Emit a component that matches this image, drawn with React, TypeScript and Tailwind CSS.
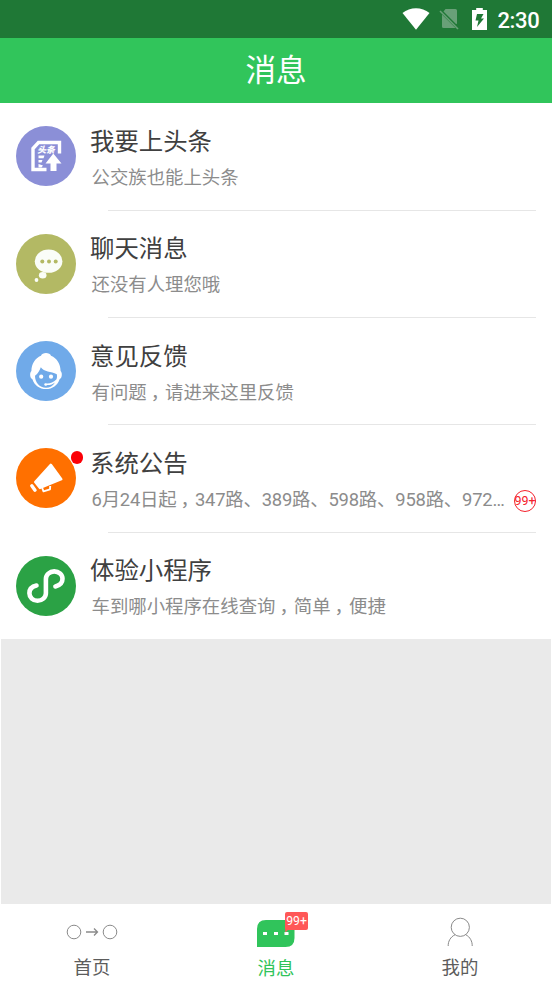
import { Fragment, ReactNode } from "react";

type Message = {
  title: string;
  desc: string;
  color: string;
  icon: ReactNode;
  dot?: boolean;
  count?: string;
};

function HeadlineIcon() {
  return (
    <svg viewBox="0 0 60 60" className="w-full h-full">
      <path d="M43.5 27.5V16.5H22.5L17 22.5V43.5H30.5" fill="none" stroke="#fff" strokeWidth="3.4" />
      <text x="21.2" y="27.3" fontSize="8.8" fontWeight="900" fontStyle="italic" fill="#fff" fontFamily="Noto Sans CJK SC, sans-serif">
        头条
      </text>
      <path d="M22.5 29.5H28.5L27.5 32.2H22.5ZM22.5 34H26.5L25.5 36.5H22.5ZM22.5 38L27 39.5L25.5 41.5H22.5Z" fill="#fff" />
      <path d="M37.3 27.5L45.5 37.5H40.5V45H34.5V37.5H29.5Z" fill="#fff" />
    </svg>
  );
}

function ChatIcon() {
  return (
    <svg viewBox="0 0 60 60" className="w-full h-full">
      <ellipse cx="32.6" cy="27.2" rx="13.8" ry="11.6" fill="#fafdf8" />
      <ellipse cx="26.7" cy="41.3" rx="3.8" ry="3.2" fill="#fafdf8" />
      <circle cx="20.5" cy="46" r="1.9" fill="#fafdf8" />
      <g fill="#b3b964">
        <circle cx="26.3" cy="27.5" r="2" />
        <circle cx="33" cy="27.5" r="2" />
        <circle cx="39.7" cy="27.5" r="2" />
      </g>
    </svg>
  );
}

function ServiceIcon() {
  return (
    <svg viewBox="0 0 60 60" className="w-full h-full">
      <path
        d="M25 14.7C26 11 34 11 35 14.7C41 17 44.5 23 44.6 30C46.4 31.2 46.4 37.2 43.6 38.2C41.5 44.5 36.5 48 30 48C23.5 48 18.5 44.5 16.4 38.2C13.6 37.2 13.6 31.2 15.4 30C15.5 23 19 17 25 14.7Z"
        fill="#fff"
      />
      <path
        d="M24.8 26.3C28 31 35 30.5 40.8 33.2C41.2 35.3 41 37 40.3 38.6C37.5 41.2 34 42.8 30.8 42.6C29.5 41.6 28 42.4 28.2 43.6C28.5 45 30.5 45.2 31.4 44.1C34.5 44.1 37 43 39 41.4C37 44.9 33.8 46.8 30 46.8C23.5 46.8 19 41.5 19 34.8C22 32.5 23.8 29.5 24.8 26.3Z"
        fill="#70aae9"
      />
      <circle cx="25.2" cy="35.7" r="2.1" fill="#fff" />
      <circle cx="35" cy="35.7" r="2.1" fill="#fff" />
    </svg>
  );
}

function MegaphoneIcon() {
  return (
    <svg viewBox="0 0 60 60" className="w-full h-full">
      <path d="M34.8 16.8L45.3 31.2L24 40L19.2 34Z" fill="#fff" stroke="#fff" strokeWidth="2.4" strokeLinejoin="round" />
      <path d="M15.8 37.8L19 42.2" stroke="#fff" strokeWidth="3.4" strokeLinecap="round" />
      <path d="M26.2 40L27.5 43.3L34 41.3L34.2 38" fill="none" stroke="#fff" strokeWidth="1.9" strokeLinejoin="round" />
    </svg>
  );
}

function MiniProgramIcon() {
  return (
    <svg viewBox="0 0 60 60" className="w-full h-full">
      <path
        d="M20.5 29.6C16 30.6 13.4 33.4 13.4 37.2C13.4 41.4 17 44.8 21.5 44.8C26 44.8 29.9 41.5 29.9 37.3V23C29.9 18.8 33.6 15.4 38.2 15.4C42.8 15.4 46.5 18.6 46.5 22.8C46.5 26.8 43.8 29.4 39.4 30.4"
        fill="none"
        stroke="#fff"
        strokeWidth="4.6"
        strokeLinecap="round"
      />
    </svg>
  );
}

const messages: Message[] = [
  { title: "我要上头条", desc: "公交族也能上头条", color: "bg-[#8b8fd7]", icon: <HeadlineIcon /> },
  { title: "聊天消息", desc: "还没有人理您哦", color: "bg-[#b3b964]", icon: <ChatIcon /> },
  { title: "意见反馈", desc: "有问题，请进来这里反馈", color: "bg-[#70aae9]", icon: <ServiceIcon /> },
  {
    title: "系统公告",
    desc: "6月24日起，347路、389路、598路、958路、972…",
    color: "bg-[#ff7000]",
    icon: <MegaphoneIcon />,
    dot: true,
    count: "99+",
  },
  { title: "体验小程序", desc: "车到哪小程序在线查询，简单，便捷", color: "bg-[#2ba245]", icon: <MiniProgramIcon /> },
];

// commas sit in the middle of their cell
function Desc({ text }: { text: string }) {
  return text.split("，").map((part, i) => (
    <Fragment key={i}>
      {i > 0 && <span className="inline-block w-[1em] pl-[4px]">，</span>}
      {part}
    </Fragment>
  ));
}

function StatusBar() {
  return (
    <div className="h-[38px] shrink-0 bg-[#1f7836] flex items-center justify-end pr-[12.5px] text-white">
      <svg viewBox="0 0 28 22" className="w-7 h-[22px]">
        <path d="M0.5 5C8 -1.3 20 -1.3 27.5 5L14 21.8Z" fill="#fff" />
      </svg>
      <svg viewBox="0 0 20 22" className="w-5 h-[22px] ml-[9px]">
        <path d="M6.5 1H16.5Q18 1 18 2.5V16.5L5 3ZM3 6.5L16.5 20H4.5Q3 20 3 18.5Z" fill="#69a078" />
        <path d="M3.5 4L17 17.5V14L6 2.5Z" fill="#69a078" />
        <path d="M2 2L19.5 19.5" stroke="#1f7836" strokeWidth="1.4" />
        <path d="M1 3L19 21" stroke="#69a078" strokeWidth="1.6" />
      </svg>
      <svg viewBox="0 0 15 22" className="w-[15px] h-[22px] ml-[13.5px]">
        <path d="M4.2 0H10.8V2H15V22H0V2H4.2Z" fill="#fff" />
        <path d="M5 6H11.5L9 10.5H12L5 19L6.5 12.5H3.5Z" fill="#1f7836" />
      </svg>
      <span className="ml-[10px] pt-[3px] font-[Roboto,sans-serif] font-medium text-[22px] leading-none tracking-[-0.3px]">2:30</span>
    </div>
  );
}

function MessageRow({ item, last }: { item: Message; last: boolean }) {
  return (
    <div className="h-[107.3px] shrink-0 flex pl-4 pr-4 relative">
      <div className="relative mt-[23.4px] w-[60px] h-[60px] shrink-0">
        <div className={`w-full h-full rounded-full ${item.color}`}>{item.icon}</div>
        {item.dot && <span className="absolute left-[54.5px] top-[3px] w-[12.5px] h-[12.5px] rounded-full bg-[#fb0007]" />}
      </div>
      <div className="ml-[14px] pt-[23px] flex-1 min-w-0 whitespace-nowrap">
        <h3 className="text-[24.4px] leading-[32px] text-[#404040]">{item.title}</h3>
        <p className={`mt-[6px] ml-[1.5px] text-[18.4px] leading-[28px] text-[#8c8c8c] ${item.count ? "tracking-[-0.2px]" : ""}`}>
          <Desc text={item.desc} />
        </p>
      </div>
      {item.count && (
        <span className="mt-[65px] w-[22px] h-[22px] shrink-0 rounded-full border-[1.3px] border-[#f5202b] text-[#f5202b] text-[12.5px] leading-none flex items-center justify-center">
          {item.count}
        </span>
      )}
      {!last && <div className="absolute left-[108px] right-4 -bottom-[0.4px] h-px bg-[#e6e6e6]" />}
    </div>
  );
}

function TabBar() {
  return (
    <nav className="h-[77px] shrink-0 bg-white grid grid-cols-3 text-[18.4px] leading-[26px] text-[#5c5c5c]">
      <div className="flex flex-col items-center pt-[10px]">
        <svg viewBox="0 0 54 36" className="w-[54px] h-9" fill="none" stroke="#8a8a8a">
          <circle cx="9" cy="18" r="6.8" />
          <circle cx="45" cy="18" r="6.8" />
          <path d="M21 18H32.5M29 14.5L32.5 18L29 21.5" strokeWidth="1.3" />
        </svg>
        <span className="mt-[5px]">首页</span>
      </div>
      <div className="flex flex-col items-center pt-[10px] text-[#30c45b]">
        <div className="relative w-[38px] h-9">
          <svg viewBox="0 0 38 36" className="w-full h-full">
            <path d="M0 33V15Q0 6 9 6H37.5V24Q37.5 33 28.5 33H0Z" fill="#30c45b" />
            <path d="M6 18H10V21H6ZM17 18H21V21H17ZM27.5 18H31.5V21H27.5Z" fill="#fff" />
            <path d="M28.3 14H33L28.3 18.5Z" fill="#ff5757" />
          </svg>
          <span className="absolute left-[28px] -top-[2px] w-[23px] h-[18px] rounded-[2px] bg-[#ff5757] text-white text-[12.2px] leading-[18px] text-center">
            99+
          </span>
        </div>
        <span className="mt-[6px]">消息</span>
      </div>
      <div className="flex flex-col items-center pt-[10px]">
        <svg viewBox="0 0 36 36" className="w-9 h-9" fill="none" stroke="#8a8a8a">
          <circle cx="18.3" cy="13.3" r="9.1" />
          <path d="M6.2 32C6 27.5 8.5 22.8 13 20.8M23.8 20.8C28 22.8 30.4 27.5 30.2 32" />
        </svg>
        <span className="mt-[5px]">我的</span>
      </div>
    </nav>
  );
}

export default function App() {
  return (
    <div className="w-[552px] h-[981px] overflow-hidden flex flex-col bg-white font-[Roboto,'Noto_Sans_CJK_SC',sans-serif]">
      <StatusBar />
      <header className="h-[65px] pt-[1px] shrink-0 bg-[#31c55b] flex items-center justify-center text-white text-[30.6px] leading-none">
        消息
      </header>
      <main className="flex-1 min-h-0 flex flex-col px-px bg-white">
        <div className="-mx-px flex flex-col h-[536px] shrink-0">
          {messages.map((item, i) => (
            <MessageRow key={item.title} item={item} last={i === messages.length - 1} />
          ))}
        </div>
        <div className="flex-1 bg-[#eaeaea]" />
      </main>
      <TabBar />
    </div>
  );
}
